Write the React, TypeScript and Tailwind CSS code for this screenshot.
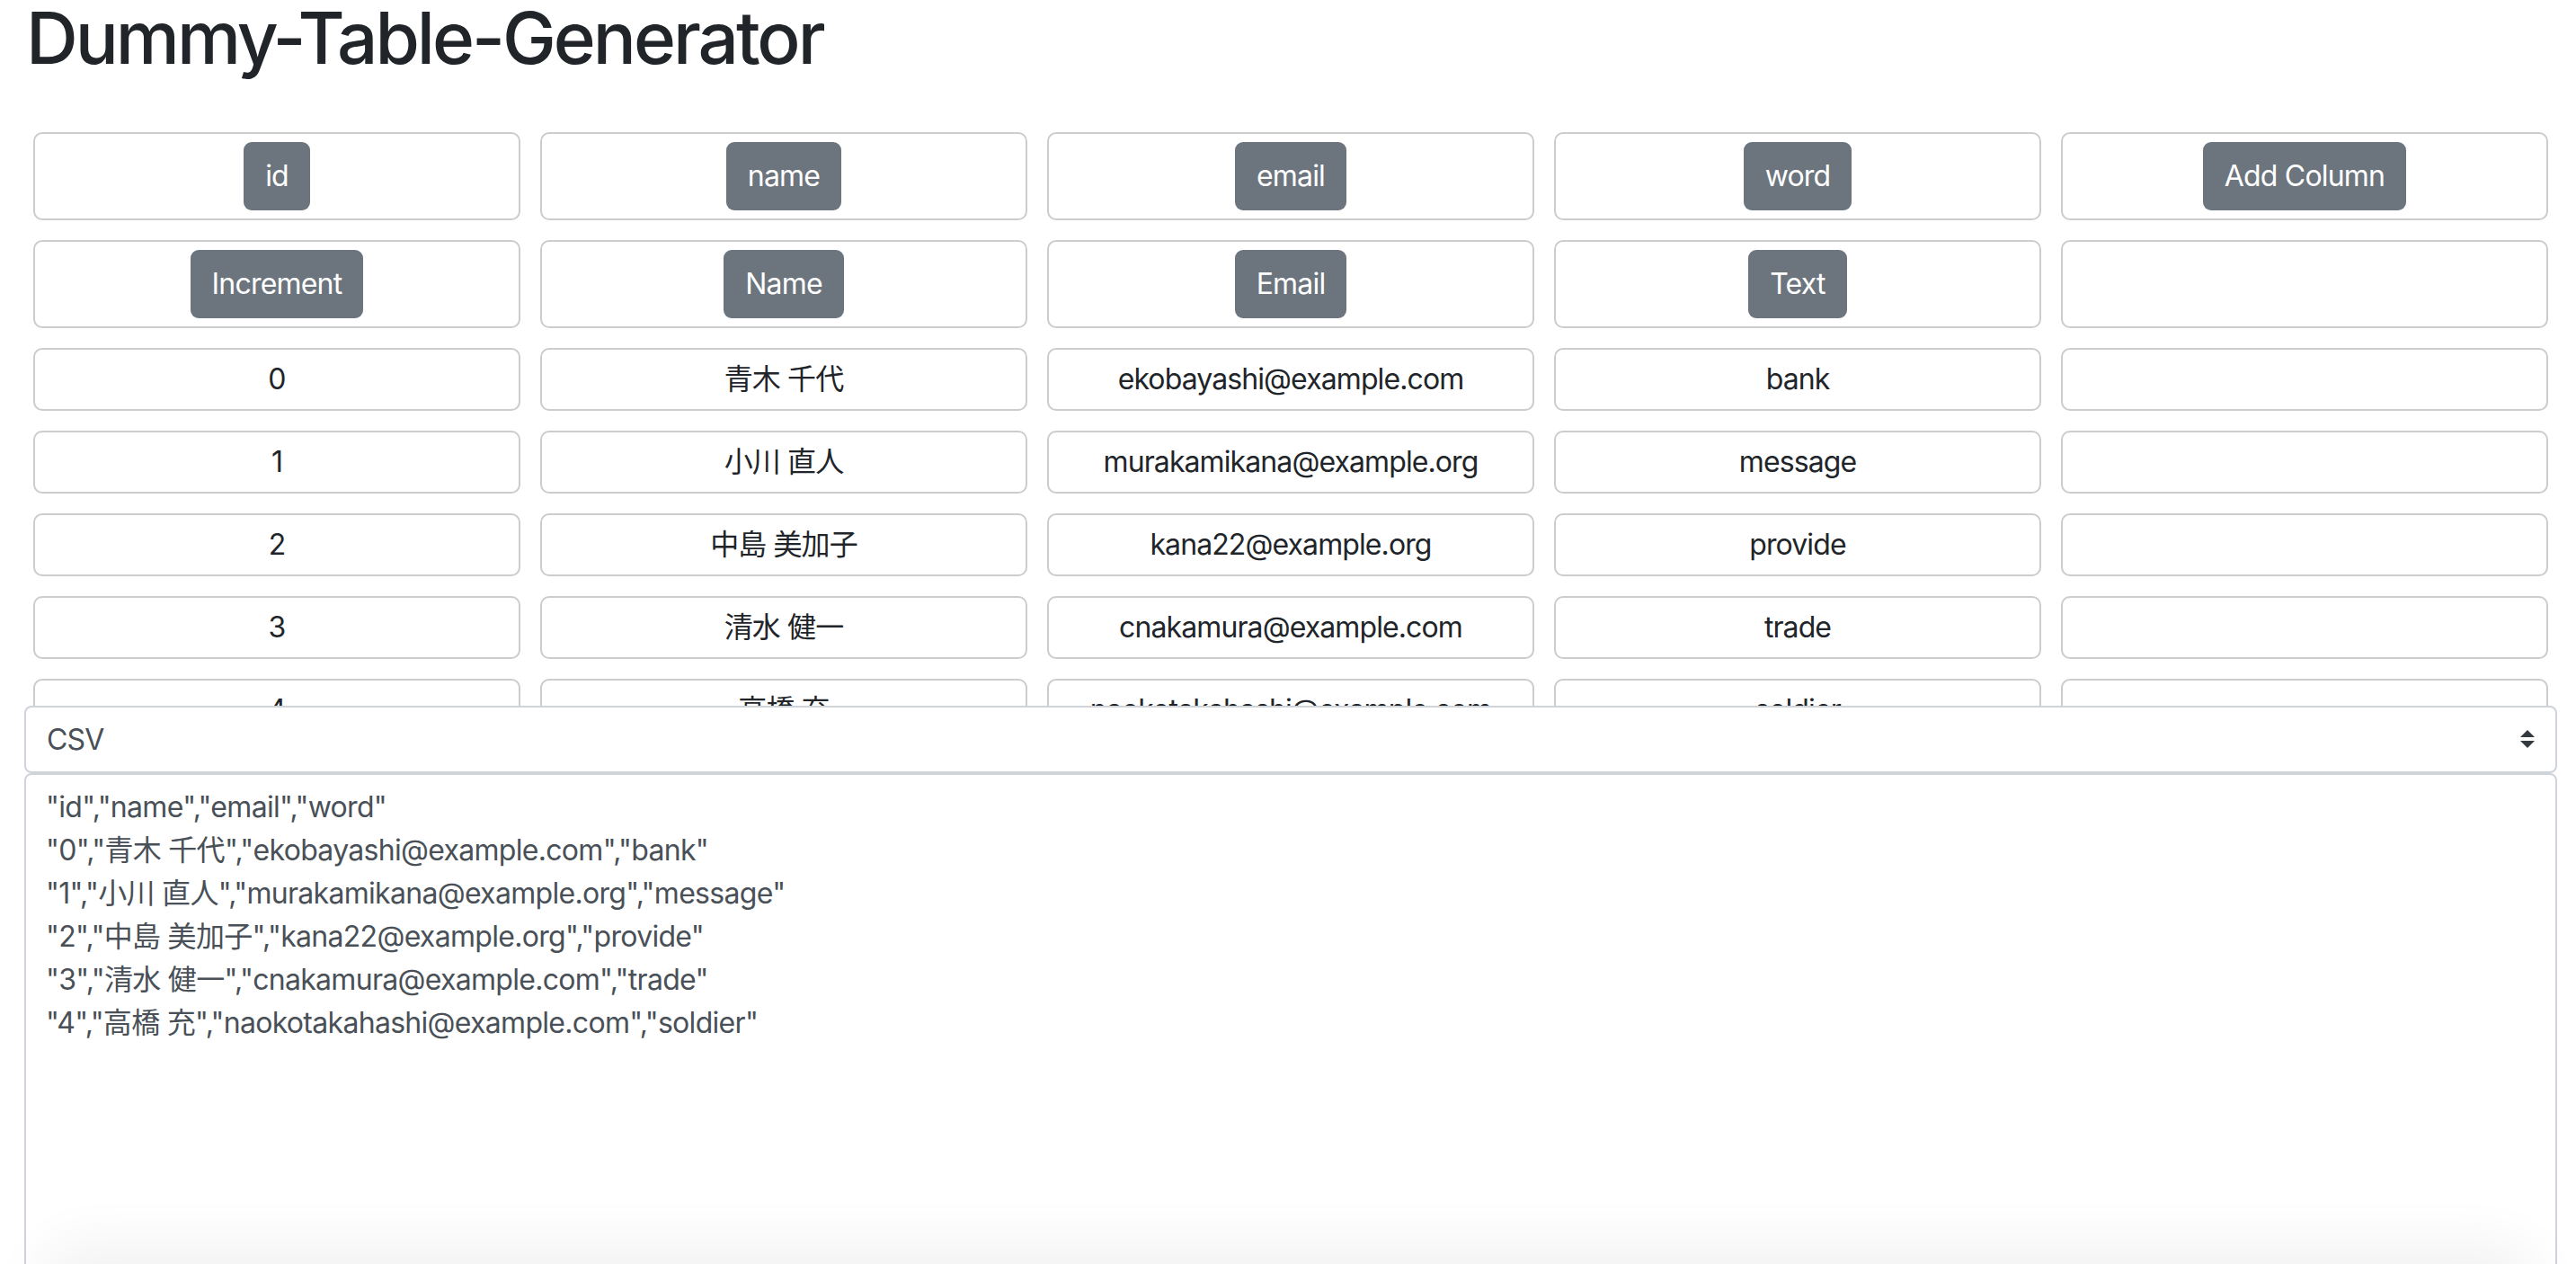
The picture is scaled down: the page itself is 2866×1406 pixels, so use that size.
import React from 'react';

type Column = {
  name: string;
  type: string;
  values: string[];
};

const columns: Column[] = [
  { name: 'id', type: 'Increment', values: ['0', '1', '2', '3', '4'] },
  { name: 'name', type: 'Name', values: ['青木 千代', '小川 直人', '中島 美加子', '清水 健一', '高橋 充'] },
  {
    name: 'email',
    type: 'Email',
    values: [
      'ekobayashi@example.com',
      'murakamikana@example.org',
      'kana22@example.org',
      'cnakamura@example.com',
      'naokotakahashi@example.com',
    ],
  },
  { name: 'word', type: 'Text', values: ['bank', 'message', 'provide', 'trade', 'soldier'] },
];

function toCsv(cols: Column[]) {
  const head = cols.map((c) => `"${c.name}"`).join(',');
  const rows = cols[0].values.map((_, i) => cols.map((c) => `"${c.values[i]}"`).join(','));
  return [head, ...rows].join('\n');
}

function Cell({ tall, children }: { tall?: boolean; children?: React.ReactNode }) {
  return (
    <div
      className={`flex items-center justify-center rounded-[10px] border-2 border-[#cccccc] bg-white ${
        tall ? 'h-[98px]' : 'h-[70px]'
      }`}
    >
      {children}
    </div>
  );
}

function Btn({ children }: { children: React.ReactNode }) {
  return (
    <button className="h-[76px] rounded-[9px] bg-[#6c757d] px-[24px] text-[32px] leading-[48px] tracking-[-0.8px] text-white">
      {children}
    </button>
  );
}

export default function App() {
  const rowCount = columns[0].values.length;

  return (
    <div
      className="relative h-[1406px] overflow-hidden bg-white pl-[27px] pr-[21px] text-[#212529]"
      style={{ fontFamily: 'Inter, "Noto Sans CJK JP", sans-serif' }}
    >
      <h1 className="pl-[2px] text-[80px] font-medium leading-[84px] tracking-[-3px]">Dummy-Table-Generator</h1>

      {/* Column editor / preview grid */}
      <div className="mt-[63px] flex h-[638px] flex-col gap-[22px] overflow-hidden px-[10px]">
        <div className="grid grid-cols-5 gap-[22px]">
          {columns.map((c) => (
            <Cell key={c.name} tall>
              <Btn>{c.name}</Btn>
            </Cell>
          ))}
          <Cell tall>
            <Btn>Add Column</Btn>
          </Cell>
        </div>

        <div className="grid grid-cols-5 gap-[22px]">
          {columns.map((c) => (
            <Cell key={c.name} tall>
              <Btn>{c.type}</Btn>
            </Cell>
          ))}
          <Cell tall />
        </div>

        {Array.from({ length: rowCount }).map((_, i) => (
          <div key={i} className="grid grid-cols-5 gap-[22px]">
            {columns.map((c) => (
              <Cell key={c.name}>
                <span className="text-[32px] leading-[48px] tracking-[-0.9px]">{c.values[i]}</span>
              </Cell>
            ))}
            <Cell />
          </div>
        ))}
      </div>

      {/* Output format */}
      <div className="relative">
        <select
          defaultValue="csv"
          className="block h-[75px] w-full appearance-none rounded-[8px] border-2 border-[#ced4da] bg-white pl-[23px] pr-[72px] text-[32px] leading-[48px] tracking-[-0.8px] text-[#495057] outline-none"
        >
          <option value="csv">CSV</option>
          <option value="json">JSON</option>
          <option value="sql">SQL</option>
        </select>
        <svg
          className="pointer-events-none absolute right-[25px] top-[27px]"
          width="16"
          height="20"
          viewBox="0 0 4 5"
        >
          <path fill="#343a40" d="M2 0L0 2h4zm0 5L0 3h4z" />
        </svg>
      </div>

      <textarea
        readOnly
        value={toCsv(columns)}
        className="block h-[700px] w-full resize-none rounded-[8px] border-2 border-[#ced4da] bg-white px-[22px] py-[12px] text-[32px] leading-[48px] tracking-[-0.7px] text-[#495057] outline-none"
      />

      {/* soft shadow at the bottom edge */}
      <div className="pointer-events-none absolute left-[80px] right-[80px] top-[1420px] h-[40px] rounded-full shadow-[0_0_60px_40px_rgba(0,0,0,0.05)]" />
    </div>
  );
}
